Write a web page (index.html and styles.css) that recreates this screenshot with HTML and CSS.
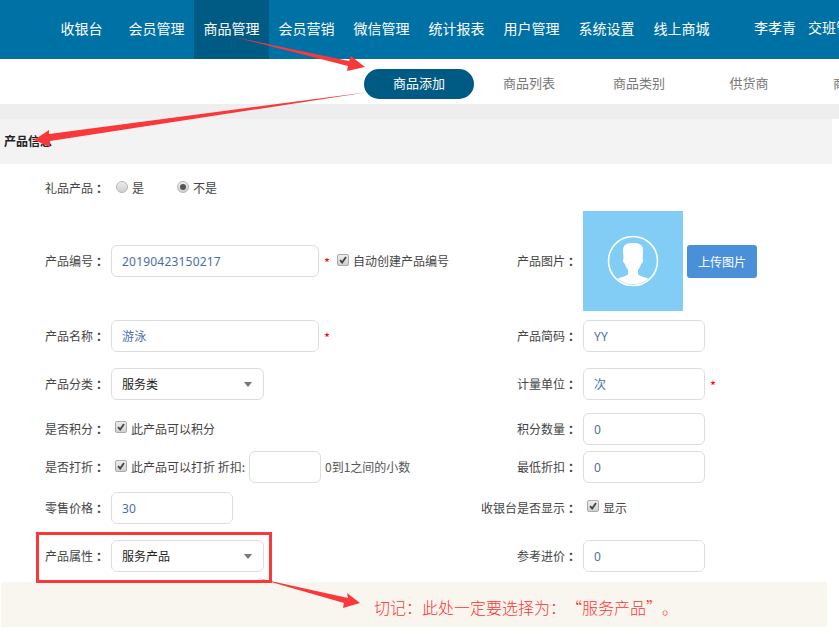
FILE: index.html
```html
<!DOCTYPE html>
<html lang="zh-CN">
<head>
<meta charset="utf-8">
<title>商品添加</title>
<link rel="stylesheet" href="styles.css">
</head>
<body>
<header class="topbar">
  <nav class="mainnav">
    <a class="navitem">收银台</a>
    <a class="navitem">会员管理</a>
    <a class="navitem active">商品管理</a>
    <a class="navitem">会员营销</a>
    <a class="navitem">微信管理</a>
    <a class="navitem">统计报表</a>
    <a class="navitem">用户管理</a>
    <a class="navitem">系统设置</a>
    <a class="navitem">线上商城</a>
  </nav>
  <div class="usernav"><span>李孝青</span><span>交班管理</span></div>
</header>
<nav class="subnav">
  <a class="subitem active">商品添加</a>
  <a class="subitem">商品列表</a>
  <a class="subitem">商品类别</a>
  <a class="subitem">供货商</a>
  <a class="subitem">商品品牌</a>
</nav>
<div class="band"></div>
<h2 class="section">产品信息</h2>
<form class="form">
  <div class="row row-first">
    <div class="field">
      <span class="label">礼品产品<span class="colon">：</span></span>
      <span class="radio"></span><span class="opt">是</span>
      <span class="radio on"></span><span class="opt">不是</span>
    </div>
  </div>
  <div class="row row-image">
    <div class="field">
      <span class="label">产品编号<span class="colon">：</span></span>
      <input class="input wide" value="20190423150217">
      <span class="star">*</span>
      <span class="check"><svg viewBox="0 0 12 12"><path d="M2.500 6.200 5 9l4.600-6.600"/></svg></span>
      <span class="opt">自动创建产品编号</span>
    </div>
    <div class="field right">
      <span class="label">产品图片<span class="colon">：</span></span>
      <div class="photo">
        <svg viewBox="0 0 100 100">
          <circle cx="50" cy="50" r="24.500" fill="none" stroke="#fff" stroke-width="1.600"/>
          <path fill="#fff" d="M50 32c-6 0-9.500 1.500-10 7l.5 9c-.3 0-.8.400-.6 1.500.3 1.500.8 3 2 3.200.8 3 2 5 3.200 6v4.500c-1 1.500-8 3.500-10.500 4.500a24 24 0 0 0 30.800 0c-2.500-1-9.500-3-10.400-4.500v-4.500c1.200-1 2.400-3 3.200-6 1.200-.2 1.700-1.700 2-3.200.2-1.100-.3-1.500-.6-1.500l.5-9c-.5-5.500-4-7-10-7z"/>
        </svg>
      </div>
      <button class="upload" type="button">上传图片</button>
    </div>
  </div>
  <div class="row gap-9">
    <div class="field">
      <span class="label">产品名称<span class="colon">：</span></span>
      <input class="input wide" value="游泳">
      <span class="star">*</span>
    </div>
    <div class="field right">
      <span class="label">产品简码<span class="colon">：</span></span>
      <input class="input" value="YY">
    </div>
  </div>
  <div class="row gap-16">
    <div class="field">
      <span class="label">产品分类<span class="colon">：</span></span>
      <div class="select"><span>服务类</span><i class="caret"></i></div>
    </div>
    <div class="field right">
      <span class="label">计量单位<span class="colon">：</span></span>
      <input class="input" value="次">
      <span class="star">*</span>
    </div>
  </div>
  <div class="row gap-13">
    <div class="field">
      <span class="label">是否积分<span class="colon">：</span></span>
      <span class="check tight"><svg viewBox="0 0 12 12"><path d="M2.500 6.200 5 9l4.600-6.600"/></svg></span>
      <span class="opt">此产品可以积分</span>
    </div>
    <div class="field right">
      <span class="label">积分数量<span class="colon">：</span></span>
      <input class="input" value="0">
    </div>
  </div>
  <div class="row gap-6">
    <div class="field">
      <span class="label">是否打折<span class="colon">：</span></span>
      <span class="check tight"><svg viewBox="0 0 12 12"><path d="M2.500 6.200 5 9l4.600-6.600"/></svg></span>
      <span class="opt">此产品可以打折 折扣:</span>
      <input class="input tiny">
      <span class="hint">0到1之间的小数</span>
    </div>
    <div class="field right">
      <span class="label">最低折扣<span class="colon">：</span></span>
      <input class="input" value="0">
    </div>
  </div>
  <div class="row gap-9">
    <div class="field">
      <span class="label">零售价格<span class="colon">：</span></span>
      <input class="input" value="30">
    </div>
    <div class="field right">
      <span class="label">收银台是否显示<span class="colon">：</span></span>
      <span class="check tight"><svg viewBox="0 0 12 12"><path d="M2.500 6.200 5 9l4.600-6.600"/></svg></span>
      <span class="opt">显示</span>
    </div>
  </div>
  <div class="row gap-16">
    <div class="field">
      <span class="label">产品属性<span class="colon">：</span></span>
      <div class="select"><span>服务产品</span><i class="caret"></i></div>
    </div>
    <div class="field right">
      <span class="label">参考进价<span class="colon">：</span></span>
      <input class="input" value="0">
    </div>
  </div>
</form>
<p class="notice">切记：此处一定要选择为：“服务产品”。</p>
<svg class="marks" viewBox="0 0 839 636" aria-hidden="true">
  <rect x="37.500" y="533.500" width="233" height="48" fill="none" stroke="#f93939" stroke-width="3"/>
  <g fill="#f93939">
    <polygon points="234,37 349,61 351,56 365,67 347,71 348,66"/>
    <polygon points="369,92 49,134 49,130 34,140 50,147 50,141"/>
    <polygon points="257,578 348,598 347,593 360,603 343,608 344,603"/>
  </g>
</svg>
</body>
</html>
```
FILE: styles.css
```css
* { box-sizing: border-box; }
html, body { margin: 0; padding: 0; }
body {
  position: relative;
  width: 839px;
  height: 636px;
  overflow: hidden;
  background: #fff;
  color: #444;
  font: 12px/1.4 "Noto Sans CJK SC", "Noto Sans", sans-serif;
}
.topbar {
  display: flex;
  height: 59px;
  padding-left: 44px;
  background: #0071a5;
  color: #fff;
  font-size: 14px;
}
.mainnav { display: flex; flex: none; width: 675px; }
.navitem {
  display: flex;
  flex: none;
  align-items: center;
  justify-content: center;
  width: 75px;
  padding-bottom: 2px;
}
.navitem.active { background: #005b84; }
.usernav {
  display: flex;
  flex: none;
  gap: 12px;
  align-items: center;
  margin-left: 35px;
  padding-bottom: 4px;
  white-space: nowrap;
}
.subnav {
  display: flex;
  height: 45px;
  padding: 10px 0 5px 364px;
  font-size: 13px;
  color: #777;
  white-space: nowrap;
}
.subitem {
  display: flex;
  flex: none;
  align-items: center;
  justify-content: center;
  width: 110px;
  height: 30px;
  padding-bottom: 2px;
}
.subitem.active {
  border-radius: 15px;
  background: #005b84;
  color: #fff;
}
.band { height: 15px; background: #eee; }
.section {
  width: 832px;
  height: 45px;
  margin: 0;
  padding-left: 4px;
  background: #f3f3f3;
  color: #222;
  font-size: 12px;
  font-weight: 700;
  line-height: 44px;
}
.form { display: block; }
.row {
  display: grid;
  grid-template-columns: 470px 1fr;
  align-items: center;
  height: 32px;
}
.row-first { height: 47px; padding-top: 2px; }
.row-image { height: 100px; }
.gap-6 { margin-top: 6px; }
.gap-9 { margin-top: 9px; }
.gap-13 { margin-top: 13px; }
.gap-16 { margin-top: 16px; }
.field { display: flex; align-items: center; white-space: nowrap; }
.label { flex: none; width: 105px; margin-right: 6px; text-align: right; }
.right .label { width: 107px; }
.colon { display: inline-block; width: 12px; text-align: left; text-indent: 3px; font-weight: 700; }
.input {
  flex: none;
  width: 122px;
  height: 32px;
  padding: 0 10px;
  border: 1px solid #ddd;
  border-radius: 6px;
  outline: none;
  background: #fff;
  color: #4a6ea9;
  font: 12px "Noto Sans", "Noto Sans CJK SC", sans-serif;
  letter-spacing: .2px;
}
.wide { width: 208px; }
.tiny { width: 72px; margin: 0 4px; }
.star { margin: 4px 7px 0 5px; color: #f00; font-size: 13px; }
.select {
  display: flex;
  align-items: center;
  justify-content: space-between;
  width: 153px;
  height: 32px;
  padding: 0 11px 0 10px;
  border: 1px solid #ddd;
  border-radius: 6px;
  color: #222;
}
.caret {
  width: 0;
  height: 0;
  border-top: 5px solid #777;
  border-right: 4px solid transparent;
  border-left: 4px solid transparent;
}
.radio {
  flex: none;
  position: relative;
  width: 12px;
  height: 12px;
  margin: -3px 4px 0 5px;
  border: 1px solid #b5b5b5;
  border-radius: 50%;
  background: linear-gradient(#ededed, #cfcfcf);
}
.radio.on { margin-left: 33px; }
.radio.on::after {
  content: "";
  position: absolute;
  inset: 2px;
  border-radius: 50%;
  background: #555;
}
.check {
  flex: none;
  width: 12px;
  height: 12px;
  margin: -3px 4px 0 0;
  border: 1px solid #aaa;
  border-radius: 2px;
  background: linear-gradient(#eee, #d0d0d0);
}
.check.tight { margin-left: 4px; }
.check svg {
  display: block;
  width: 10px;
  height: 10px;
  fill: none;
  stroke: #444;
  stroke-width: 2.200;
}
.hint { color: #555; }
.photo { flex: none; width: 100px; height: 100px; background: #81cdf6; }
.photo svg { display: block; width: 100%; height: 100%; }
.upload {
  width: 70px;
  height: 33px;
  margin-left: 4px;
  padding: 0;
  border: 0;
  border-radius: 3px;
  background: #4a90d9;
  color: #fff;
  font: 12px "Noto Sans CJK SC", sans-serif;
}
.notice {
  width: 826px;
  height: 45px;
  margin: 10px 0 0 1px;
  padding-left: 373px;
  background: #f9f6ef;
  color: #f33;
  font-size: 16px;
  font-weight: 300;
  text-spacing-trim: space-all;
  line-height: 50px;
  white-space: nowrap;
}
.marks { position: absolute; top: 0; left: 0; width: 839px; height: 636px; pointer-events: none; }
```
